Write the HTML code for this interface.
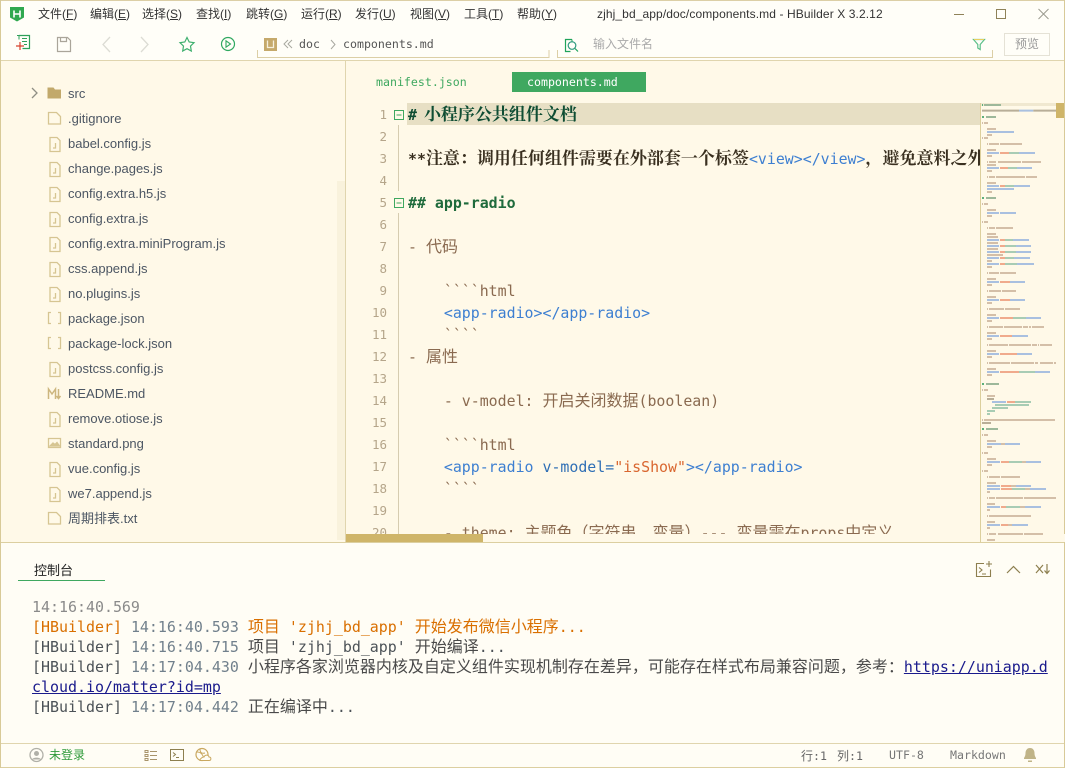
<!DOCTYPE html>
<html lang="zh-CN"><head><meta charset="utf-8"><title>HBuilder X</title>
<style>
html,body{margin:0;padding:0;width:1065px;height:768px;overflow:hidden;background:#fffef7}
*{box-sizing:border-box}
.a{position:absolute}
.t{position:absolute;white-space:pre;line-height:20px;height:20px}
#root{position:absolute;left:0;top:0;width:1065px;height:768px;overflow:hidden;font-family:"Liberation Sans","Noto Sans CJK SC",sans-serif;background:#fffef7}
.m{font:12px/20px "Liberation Sans","Noto Sans CJK SC",sans-serif;color:#333;top:4px}
.m u{text-underline-offset:1px}
.f{font:13px/20px "Liberation Sans","Noto Sans CJK SC",sans-serif;color:#4c5663;left:68px}
.mono{font-family:"DejaVu Sans Mono","Noto Sans CJK SC",monospace}
.ln{position:absolute;width:30px;left:357px;text-align:right;font:12.5px/22px "DejaVu Sans Mono",monospace;color:#b5a58a;height:22px;margin-top:1px}
.c{position:absolute;left:408px;height:22px;white-space:pre;font:14.9px/22px "DejaVu Sans Mono","Noto Sans CJK SC",monospace;color:#8a6a50;margin-top:1px}
.c i{font:16px/0 "Noto Sans CJK SC",sans-serif;font-style:normal}
.sf{font:bold 17px/0 "Noto Serif CJK SC",serif}
.b{color:#3d7fd1}
.cl{position:absolute;left:32px;height:20px;white-space:pre;font:14.95px/20px "DejaVu Sans Mono","Noto Sans CJK SC",monospace;color:#4c5257}
.cl i{font:16px/0 "Noto Sans CJK SC",sans-serif;font-style:normal;color:#4a4a4a}
.cl u{color:#1a1a8c}
.tm{color:#71808c}
svg{position:absolute;overflow:visible}
</style></head><body>
<div id="root">
<div class="a" style="left:0;top:0;width:1065px;height:60px;background:#fffef8"></div>
<div class="a" style="left:0;top:60px;width:1065px;height:482px;background:#fff9e8"></div>
<div class="a" style="left:0;top:542px;width:1065px;height:226px;background:#fffdf5"></div>
<div class="a" style="left:0;top:0;width:1065px;height:1px;background:#dccfa6"></div>
<div class="a" style="left:0;top:60px;width:1065px;height:1px;background:#e0d5ae"></div>
<div class="a" style="left:345px;top:60px;width:1px;height:482px;background:#e0d5ae"></div>
<div class="a" style="left:337px;top:181px;width:8px;height:359px;background:#f9f2dc"></div>
<div class="a" style="left:0;top:542px;width:1065px;height:1px;background:#dccfa0"></div>
<div class="a" style="left:0;top:743px;width:1065px;height:1px;background:#e0d5ae"></div>
<div class="a" style="left:0;top:767px;width:1065px;height:1px;background:#dccfa0"></div>
<div class="a" style="left:0;top:0;width:1px;height:768px;background:#d8ca98"></div>
<div class="a" style="left:1064px;top:0;width:1px;height:768px;background:#d8ca98"></div>

<svg style="left:0;top:0" width="40" height="30"><path d="M10 7h14v10.500l-7 4-7-4z" fill="#2fa84f"/><path d="M14 10.500v7M20 10.500v7M14 14h6" stroke="#fff" stroke-width="1.600" fill="none"/></svg>
<div class="t m" style="left:38px">文件(<u>F</u>)</div><div class="t m" style="left:90px">编辑(<u>E</u>)</div><div class="t m" style="left:142px">选择(<u>S</u>)</div><div class="t m" style="left:196px">查找(<u>I</u>)</div><div class="t m" style="left:246px">跳转(<u>G</u>)</div><div class="t m" style="left:301px">运行(<u>R</u>)</div><div class="t m" style="left:355px">发行(<u>U</u>)</div><div class="t m" style="left:410px">视图(<u>V</u>)</div><div class="t m" style="left:464px">工具(<u>T</u>)</div><div class="t m" style="left:517px">帮助(<u>Y</u>)</div>
<div class="t m" style="left:597px;letter-spacing:.1px">zjhj_bd_app/doc/components.md - HBuilder X 3.2.12</div>
<svg style="left:950px;top:4px" width="104" height="20" fill="none" stroke="#8f8258"><path d="M4 10.500h10"/><rect x="46.500" y="5.500" width="9" height="9"/><path d="M88.500 5l10 10M98.500 5l-10 10" stroke="#9b9b90"/></svg>

<svg style="left:0;top:30px" width="560" height="30" fill="none">
<path d="M19 5.500h10.500v13h-7" stroke="#2fa05a" stroke-width="1.200"/><path d="M17 5.500h2v4M22 8.500h5M22 11.500h5M24 14.500h3" stroke="#2fa05a"/><path d="M16 15h8M20 11v8" stroke="#d8432f" stroke-width="1.200" transform="translate(0,1)"/>
<path d="M57.500 7.500h10l3 3v11h-13z M60.500 7.500v4h6v-4" stroke="#aaa59a" stroke-width="1.200"/>
<path d="M110 7l-7 7.500 7 7.500" stroke="#dcdcd4" stroke-width="1.300"/>
<path d="M141 7l7 7.500-7 7.500" stroke="#dcdcd4" stroke-width="1.300"/>
<path d="M187 7.500l2.200 4.500 4.800.7-3.500 3.400.8 4.900-4.300-2.300-4.300 2.300.8-4.900-3.500-3.400 4.800-.7z" stroke="#3fb06f" stroke-width="1.200"/>
<circle cx="228" cy="14" r="6.500" stroke="#2fa860" stroke-width="1.200"/><path d="M226 10.800v6.400l4.500-3.200z" stroke="#2fa860" stroke-width="1.100"/>
<rect x="264" y="8" width="13" height="13" fill="#c5a96b"/><path d="M267.500 10.500v7h6v-7" stroke="#f6efdc" stroke-width="1.300"/>
<path d="M288 10l-4 4 4 4M292 10l-4 4 4 4" stroke="#a8a8a0"/>
<path d="M331 10l4 4.500-4 4.500" stroke="#a8a8a0"/>
<path d="M257.500 20v7.500h291.500v-7.500" stroke="#dccfa6"/>
<path d="M557.500 20v7.500" stroke="#dccfa6"/>
</svg>
<div class="t mono" style="left:299px;top:34px;font-size:11.6px;color:#555">doc</div>
<div class="t mono" style="left:343px;top:34px;font-size:11.6px;color:#555">components.md</div>
<div class="a" style="left:557px;top:57px;width:436px;height:1px;background:#dccfa6"></div>
<div class="a" style="left:992px;top:50px;width:1px;height:8px;background:#dccfa6"></div>
<svg style="left:560px;top:34px" width="30" height="22" fill="none"><path d="M12 5.500H5.500v12h5" stroke="#1fa35a" stroke-width="1.200"/><path d="M12 5.500v3" stroke="#1fa35a"/><circle cx="12" cy="11.500" r="3.800" stroke="#2f9a80" stroke-width="1.200"/><path d="M15 14.500l3 3" stroke="#1fa35a" stroke-width="1.200"/></svg>
<div class="t" style="left:593px;top:34px;font-size:12px;color:#aaa">输入文件名</div>
<svg style="left:970px;top:34px" width="20" height="20" fill="none"><path d="M3.500 5.500h11l-4.300 5v5l-2.400-1.500v-3.500z" stroke="#5cc08a" stroke-width="1.200"/><path d="M4 5.500h10" stroke="#e8d060"/></svg>
<div class="a" style="left:1004px;top:33px;width:46px;height:23px;border:1px solid #e5e2d6"></div>
<div class="t" style="left:1015px;top:34px;font-size:12px;color:#999">预览</div>

<div class="t mono" style="left:376px;top:72px;font-size:11.6px;color:#3fa860">manifest.json</div>
<div class="a" style="left:512px;top:72px;width:134px;height:20px;background:#3fa860"></div>
<div class="t mono" style="left:527px;top:72px;font-size:11.6px;color:#fff">components.md</div>

<svg style="left:0;top:60px" width="70" height="480" fill="none">
<path d="M32 28l5 5-5 5" stroke="#8f8f85" stroke-width="1.300"/>
<path d="M47.500 27.500h6l1.500 2h6v9h-13.500z" fill="#c2a96b"/>
<g stroke="#d6c592" stroke-width="1.300">
<path d="M48.500 52.500h8l4 4v7.500h-12z"/>
<path d="M50 77.500h7l3 3v11h-10zM55.500 83v5h-2.500"/>
<path d="M50 102.500h7l3 3v11h-10zM55.500 108v5h-2.500"/>
<path d="M50 127.500h7l3 3v11h-10zM55.500 133v5h-2.500"/>
<path d="M50 152.500h7l3 3v11h-10zM55.500 158v5h-2.500"/>
<path d="M50 177.500h7l3 3v11h-10zM55.500 183v5h-2.500"/>
<path d="M50 202.500h7l3 3v11h-10zM55.500 208v5h-2.500"/>
<path d="M50 227.500h7l3 3v11h-10zM55.500 233v5h-2.500"/>
<path d="M51 252.500h-2.500v11h2.500M58 252.500h2.500v11h-2.500"/>
<path d="M51 277.500h-2.500v11h2.500M58 277.500h2.500v11h-2.500"/>
<path d="M50 302.500h7l3 3v11h-10zM55.500 308v5h-2.500"/>
<path d="M48.500 339v-10l3.500 5 3.500-5v10M58.500 329v9M56.500 336l2 2.500 2-2.500" stroke="#cdb67e" stroke-width="1.500"/>
<path d="M50 352.500h7l3 3v11h-10zM55.500 358v5h-2.500"/>
<path d="M48.500 378.500h12v9h-12z"/><path d="M50 386l3-3 2 1.500 2-2 2.500 3.500z" fill="#d6c592"/>
<path d="M50 402.500h7l3 3v11h-10zM55.500 408v5h-2.500"/>
<path d="M50 427.500h7l3 3v11h-10zM55.500 433v5h-2.500"/>
<path d="M48.500 452.500h8l4 4v7.500h-12z"/>
</g></svg>
<div class="t f" style="top:84px">src</div><div class="t f" style="top:109px">.gitignore</div><div class="t f" style="top:134px">babel.config.js</div><div class="t f" style="top:159px">change.pages.js</div><div class="t f" style="top:184px">config.extra.h5.js</div><div class="t f" style="top:209px">config.extra.js</div><div class="t f" style="top:234px">config.extra.miniProgram.js</div><div class="t f" style="top:259px">css.append.js</div><div class="t f" style="top:284px">no.plugins.js</div><div class="t f" style="top:309px">package.json</div><div class="t f" style="top:334px">package-lock.json</div><div class="t f" style="top:359px">postcss.config.js</div><div class="t f" style="top:384px">README.md</div><div class="t f" style="top:409px">remove.otiose.js</div><div class="t f" style="top:434px">standard.png</div><div class="t f" style="top:459px">vue.config.js</div><div class="t f" style="top:484px">we7.append.js</div><div class="t f" style="top:509px">周期排表.txt</div>

<div class="a" style="left:407px;top:103px;width:573px;height:22px;background:#e7dfc4"></div>
<div class="ln" style="top:103px">1</div><div class="ln" style="top:125px">2</div><div class="ln" style="top:147px">3</div><div class="ln" style="top:169px">4</div><div class="ln" style="top:191px">5</div><div class="ln" style="top:213px">6</div><div class="ln" style="top:235px">7</div><div class="ln" style="top:257px">8</div><div class="ln" style="top:279px">9</div><div class="ln" style="top:301px">10</div><div class="ln" style="top:323px">11</div><div class="ln" style="top:345px">12</div><div class="ln" style="top:367px">13</div><div class="ln" style="top:389px">14</div><div class="ln" style="top:411px">15</div><div class="ln" style="top:433px">16</div><div class="ln" style="top:455px">17</div><div class="ln" style="top:477px">18</div><div class="ln" style="top:499px">19</div><div class="ln" style="top:521px;height:13px;overflow:hidden">20</div>
<svg style="left:390px;top:100px" width="16" height="434" fill="none"><path d="M8.500 25v66M8.500 113v321" stroke="#d6ccb0"/><rect x="4.500" y="10.500" width="9" height="9" stroke="#3fa860"/><path d="M6.500 15h5" stroke="#3fa860"/><rect x="4.500" y="98.500" width="9" height="9" stroke="#3fa860"/><path d="M6.500 103h5" stroke="#3fa860"/></svg>
<div class="a" style="left:346px;top:60px;width:634px;height:474px;overflow:hidden">
<div style="position:absolute;left:-346px;top:-60px;width:1065px;height:768px">
<div class="c" style="top:103px;font-weight:bold;color:#0f4d33"># <span class="sf" style="margin-left:-2px">小程序公共组件文档</span></div>
<div class="c" style="top:147px;font-weight:bold;color:#3a3020">**<span class="sf">注意：调用任何组件需要在外部套一个标签</span><span class="b" style="font-weight:normal">&lt;view&gt;&lt;/view&gt;</span><span class="sf">，避免意料之外</span></div>
<div class="c" style="top:191px;font-weight:bold;color:#1f6b3c">## app-radio</div>
<div class="c" style="top:235px">- <i>代码</i></div>
<div class="c" style="top:279px">    &#96;&#96;&#96;&#96;html</div>
<div class="c b" style="top:301px">    &lt;app-radio&gt;&lt;/app-radio&gt;</div>
<div class="c" style="top:323px">    &#96;&#96;&#96;&#96;</div>
<div class="c" style="top:345px">- <i>属性</i></div>
<div class="c" style="top:389px">    - v-model: <i>开启关闭数据</i>(boolean)</div>
<div class="c" style="top:433px">    &#96;&#96;&#96;&#96;html</div>
<div class="c" style="top:455px"><span class="b">    &lt;app-radio </span><span style="color:#2f6fb5">v-model=</span><span style="color:#d9662f">"isShow"</span><span class="b">&gt;&lt;/app-radio&gt;</span></div>
<div class="c" style="top:477px">    &#96;&#96;&#96;&#96;</div>
<div class="c" style="top:521px">    - theme: <i>主题色（字符串、变量）</i>--- <i>变量需在</i>props<i>中定义</i></div>
</div></div>
<div class="a" style="left:346px;top:534px;width:719px;height:8px;background:#fff9e8"></div>
<div class="a" style="left:346px;top:534px;width:137px;height:8px;background:#cfb569"></div>

<div class="a" style="left:980px;top:103px;width:1px;height:439px;background:#dccf9c"></div>
<div class="a" style="left:981px;top:103px;width:75px;height:3px;background:#f0e8d0"></div>
<div class="a" style="left:1056px;top:103px;width:8px;height:15px;background:#cfb569"></div>
<svg style="left:970px;top:95px;overflow:hidden" width="95" height="447" viewBox="0 0 285 1341" fill="none" stroke-width="6">
<path stroke="#d4bfa8" d="M36 84h3M42 84h12M51 102h27M51 120h15M36 129h3M42 129h12M51 147h3M57 147h30M90 147h66M51 165h27M51 183h15M51 201h3M57 201h21M84 201h69M156 201h57M51 210h27M51 228h15M51 246h3M57 246h18M78 246h87M168 246h33M51 264h27M51 291h15M36 327h3M42 327h12M51 345h27M51 363h15M36 381h3M42 381h12M51 399h3M57 399h18M78 399h51M51 417h27M51 426h33M51 444h33M51 462h33M51 480h48M51 498h15M51 516h15M51 534h3M57 534h30M90 534h48M51 552h27M51 570h15M51 588h3M57 588h36M96 588h42M51 606h27M51 624h15M51 642h3M57 642h45M105 642h45M51 660h27M51 678h15M51 696h3M57 696h42M102 696h54M159 696h15M177 696h6M186 696h36M51 714h27M51 732h15M51 750h3M57 750h57M117 750h66M186 750h15M204 750h3M210 750h36M51 768h27M51 786h15M51 804h3M57 804h63M123 804h69M195 804h9M210 804h39M252 804h6M51 822h27M51 840h15M36 885h3M42 885h12M51 903h24M36 975h3M42 975h213M36 1020h3M42 1020h12M51 1038h27M93 1047h12M51 1056h15M36 1074h3M42 1074h12M51 1092h27M156 1101h12M51 1110h15M36 1128h3M42 1128h12M51 1146h3M57 1146h33M93 1146h57M51 1164h27M123 1173h15M165 1182h15M51 1191h9M51 1209h3M57 1209h18M78 1209h81M162 1209h96M51 1227h24M150 1236h15M51 1245h9M51 1263h3M57 1263h126M51 1281h24M114 1290h12M51 1299h9M51 1317h3M57 1317h21M84 1317h75M162 1317h57M51 1335h24"/>
<path stroke="#a9c0e0" d="M147 47h43M51 111h81M51 174h36M147 174h48M51 219h36M141 219h45M51 273h36M132 273h48M51 282h81M51 354h36M90 354h48M51 435h36M129 435h48M51 453h36M138 453h45M51 471h36M138 471h45M51 489h36M132 489h48M51 507h36M141 507h51M51 561h36M120 561h45M51 615h36M120 615h45M51 669h36M168 669h45M51 723h36M126 723h48M51 777h36M141 777h45M51 831h36M195 831h45M66 921h42M51 1047h42M105 1047h45M51 1101h39M168 1101h45M51 1173h39M138 1173h45M51 1182h39M180 1182h48M51 1236h39M165 1236h48M51 1290h39M126 1290h48"/>
<path stroke="#f0aa8c" d="M90 174h27M90 219h24M90 273h15M90 435h15M90 453h15M90 471h15M90 489h15M90 507h15M90 561h30M90 615h30M90 669h39M90 723h36M90 777h51M90 831h57M111 921h24M93 1101h24M93 1173h30M93 1182h33M93 1236h15M93 1290h21"/>
<path stroke="#a8ccb4" d="M117 174h30M114 219h27M105 273h27M105 435h24M105 453h33M105 471h33M105 489h27M105 507h36M129 669h39M147 831h48M135 921h48M75 930h102M66 939h48M51 948h24M51 957h9M117 1101h39M126 1182h39M108 1236h42"/>
<path stroke="#9db89a" d="M42 30h51M48 66h30M48 309h30M48 867h39M48 1002h36"/>
<path stroke="#5cb07a" d="M36 30h3M36 66h6M36 309h6M36 867h6M36 1002h6"/>
<path stroke="#b8ae98" d="M36 47h111M190 47h68M51 912h21M36 984h27"/>
</svg>

<div class="t" style="left:34px;top:561px;font-size:13px;color:#222">控制台</div>
<div class="a" style="left:18px;top:580px;width:87px;height:1px;background:#3fa860"></div>
<svg style="left:970px;top:558px" width="90" height="22" fill="none" stroke="#8d7f4f" stroke-width="1.100"><path d="M14 5.500H6.500v13h14v-7"/><path d="M9 9.500l3 2.500-3 2.500M12 16h4M19 3v6M16 6h6"/><path d="M37 15l6.500-6.500 6.500 6.500" stroke-width="1.200"/><path d="M66 7l7 8M73 7l-7 8M77 6v9M74.500 12.500l2.500 3 2.500-3" stroke-width="1.200"/></svg>
<div class="cl" style="top:597px;color:#8a8a8a">14:16:40.569</div>
<div class="cl" style="top:617px;color:#d96f00">[HBuilder] <span class="tm">14:16:40.593</span> <i style="color:#d96f00">项目</i> 'zjhj_bd_app' <i style="color:#d96f00">开始发布微信小程序</i>...</div>
<div class="cl" style="top:637px">[HBuilder] <span class="tm">14:16:40.715</span> <i>项目</i> 'zjhj_bd_app' <i>开始编译</i>...</div>
<div class="cl" style="top:657px">[HBuilder] <span class="tm">14:17:04.430</span> <i>小程序各家浏览器内核及自定义组件实现机制存在差异，可能存在样式布局兼容问题，参考：</i><u>https://uniapp.d</u></div>
<div class="cl" style="top:677px"><u>cloud.io/matter?id=mp</u></div>
<div class="cl" style="top:697px">[HBuilder] <span class="tm">14:17:04.442</span> <i>正在编译中</i>...</div>

<svg style="left:25px;top:745px" width="195" height="20" fill="none">
<circle cx="11.500" cy="10" r="6.500" stroke="#b0b0a8" stroke-width="1.300"/><circle cx="11.500" cy="8.500" r="2.500" fill="#b0b0a8"/><path d="M7 14.500c1-2.500 8-2.500 9 0z" fill="#b0b0a8"/>
<path d="M120 5.500h3v2h-3zM120 9.500h3v2h-3zM120 13.500h3v2h-3zM125 6.500h7M125 10.500h7M125 14.500h7" stroke="#a8946a"/>
<rect x="145.500" y="4.500" width="13" height="11" stroke="#8d7f4f"/><path d="M148 7.500l2.500 2-2.500 2M151 12.500h3" stroke="#8d7f4f"/>
<circle cx="177" cy="9.500" r="6" stroke="#c9a860" stroke-width="1.200"/><path d="M172 7c3 0 6 2 7 7M175 4c0 3 1 5 5 4" stroke="#c9a860"/><path d="M175 15.500h9c2.500 0 2.500-3.500 0-3.500-.5-2.500-4-2.500-5 0-2-.5-5 3.500-4 3.500z" fill="#fffdf5" stroke="#c9a860"/>
</svg>
<div class="t" style="left:49px;top:745px;font-size:12px;color:#2f9a3a">未登录</div>
<div class="t mono" style="left:801px;top:746px;font-size:11.6px;color:#666"><span style="font-size:12px">行</span>:1</div>
<div class="t mono" style="left:837px;top:746px;font-size:11.6px;color:#666"><span style="font-size:12px">列</span>:1</div>
<div class="t mono" style="left:889px;top:745px;font-size:11.6px;color:#777">UTF-8</div>
<div class="t mono" style="left:950px;top:745px;font-size:11.6px;color:#777">Markdown</div>
<svg style="left:1020px;top:746px" width="20" height="18"><path d="M10 2c-3 0-4.500 2.500-4.500 5 0 3-1 4-1.500 5v1h12v-1c-.5-1-1.500-2-1.500-5 0-2.500-1.500-5-4.500-5z" fill="#c0b488"/><path d="M8 14.500h4v1.500h-4z" fill="#c0b488"/></svg>
</div>
</body></html>
